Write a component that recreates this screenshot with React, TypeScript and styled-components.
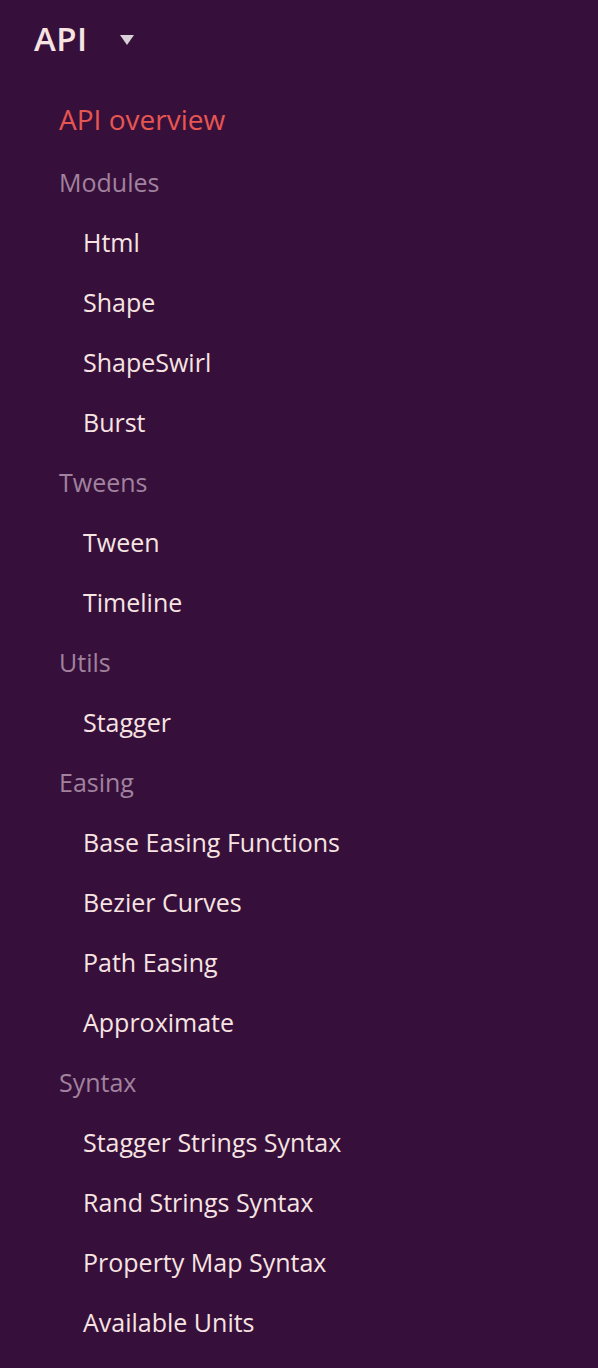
import React from "react";
import styled, { createGlobalStyle } from "styled-components";

const Global = createGlobalStyle`
  html, body { margin: 0; padding: 0; background: #36103a; }
  body { font-family: "Open Sans", "Noto Sans", sans-serif; }
`;

const Sidebar = styled.nav`
  width: 598px;
  min-height: 1368px;
  background: #36103a;
  box-sizing: border-box;
  padding: 12px 0 0 34px;
`;

const Header = styled.div`
  display: flex;
  align-items: center;
  gap: 32px;
  height: 52px;
  color: #f7e4e2;
  font-size: 33px;
  font-weight: 600;
  letter-spacing: 0.5px;
`;

const Caret = styled.span`
  width: 0;
  height: 0;
  border-left: 7.5px solid transparent;
  border-right: 7.5px solid transparent;
  border-top: 10px solid #d9cfd6;
  margin-top: 3px;
`;

const List = styled.ul`
  list-style: none;
  margin: 22px 0 0;
  padding: 0 0 0 25px;
`;

const Row = styled.li<{ $kind: "active" | "heading" | "item" }>`
  height: ${(p) => (p.$kind === "active" ? 66 : 60)}px;
  display: flex;
  align-items: center;
  padding-left: ${(p) => (p.$kind === "item" ? 24 : 0)}px;
  font-size: ${(p) => (p.$kind === "active" ? 28 : 25)}px;
  color: ${(p) =>
    p.$kind === "active" ? "#e65652" : p.$kind === "heading" ? "#a1829f" : "#f7e4e2"};
`;

type Entry = { t: string; k: "active" | "heading" | "item" };

const entries: Entry[] = [
  { t: "API overview", k: "active" },
  { t: "Modules", k: "heading" },
  { t: "Html", k: "item" },
  { t: "Shape", k: "item" },
  { t: "ShapeSwirl", k: "item" },
  { t: "Burst", k: "item" },
  { t: "Tweens", k: "heading" },
  { t: "Tween", k: "item" },
  { t: "Timeline", k: "item" },
  { t: "Utils", k: "heading" },
  { t: "Stagger", k: "item" },
  { t: "Easing", k: "heading" },
  { t: "Base Easing Functions", k: "item" },
  { t: "Bezier Curves", k: "item" },
  { t: "Path Easing", k: "item" },
  { t: "Approximate", k: "item" },
  { t: "Syntax", k: "heading" },
  { t: "Stagger Strings Syntax", k: "item" },
  { t: "Rand Strings Syntax", k: "item" },
  { t: "Property Map Syntax", k: "item" },
  { t: "Available Units", k: "item" },
];

export default function App() {
  return (
    <>
      <Global />
      <Sidebar>
        <Header>
          API
          <Caret />
        </Header>
        <List>
          {entries.map((e) => (
            <Row key={e.t} $kind={e.k}>
              {e.t}
            </Row>
          ))}
        </List>
      </Sidebar>
    </>
  );
}
